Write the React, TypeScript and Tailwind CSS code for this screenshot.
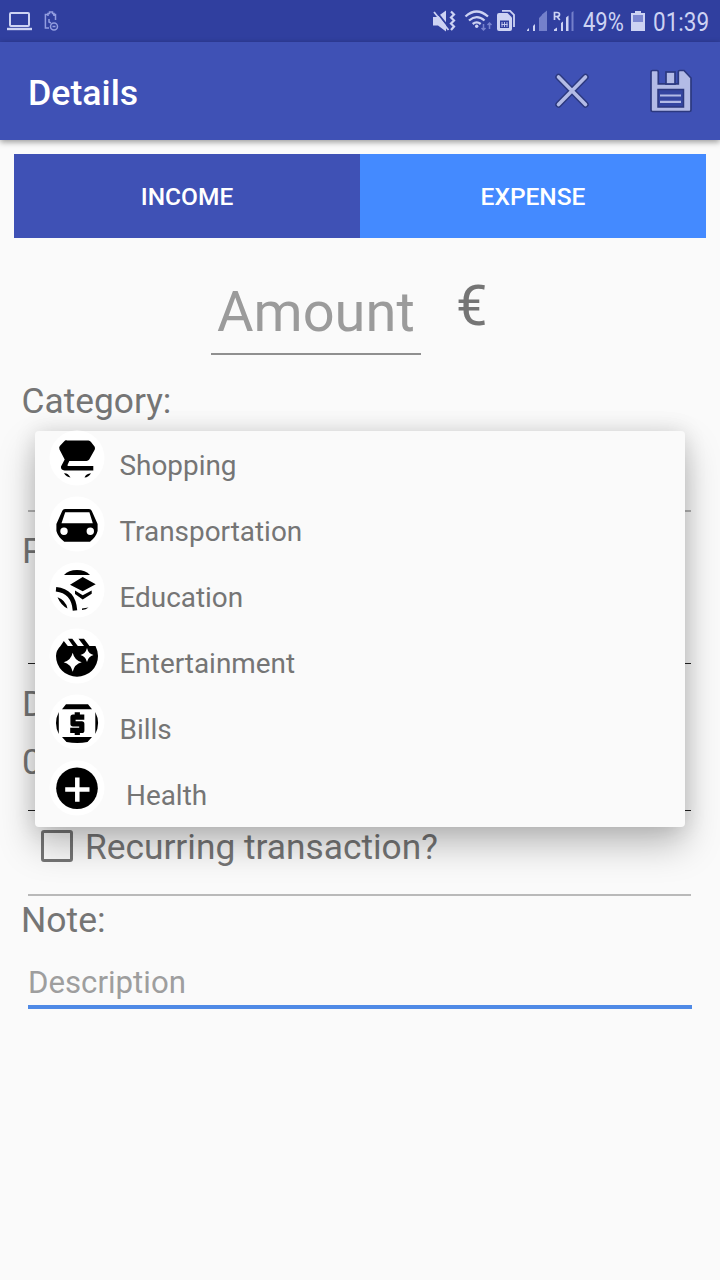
import type { ReactNode } from "react";

function StatusBar() {
  return (
    <header className="flex h-[42px] shrink-0 items-center bg-[#303f9f] text-[#cdd3f3]">
      <svg className="h-[42px] w-[70px]" viewBox="0 0 70 42" fill="none" stroke="currentColor">
        <rect x="10" y="13" width="19" height="13" rx="1" strokeWidth="2" />
        <path d="M7 29h25" strokeWidth="2.4" />
        <g stroke="#929de0" strokeWidth="1.5">
          <path d="M49 28h-3.600V14.500H48M53 14.500h2.500V20M48 16v-2.500h1.500V12h3v1.500H54V16" />
          <path d="M49 19v3l2 1" />
          <circle cx="54" cy="26.500" r="3.500" />
          <path d="M52.500 26.500h3" />
        </g>
      </svg>
      <svg className="ml-[350px] h-[42px] w-[160px]" viewBox="420 0 160 42" fill="currentColor">
        <path d="M433 17h4l9-6.500V31.500l-8-6h-5z" />
        <path d="M435.500 10.500l13 16.500" stroke="#303f9f" strokeWidth="2" />
        <path d="M434 12l14.500 18" stroke="currentColor" strokeWidth="1.800" />
        <path d="M451 11.500l3 3-3 3 3 3-3 3 3 3-3 3.500" fill="none" stroke="currentColor" strokeWidth="2.200" />
        <g fill="none" stroke="currentColor" strokeWidth="2.300">
          <path d="M465.500 16.500q11-10 22.500 0" />
          <path d="M469 20.500q7.800-6.800 15.500 0" />
          <path d="M472.700 24q4-3.300 8 0" />
        </g>
        <circle cx="476.700" cy="26.300" r="1.700" />
        <g fill="none" stroke="#7782ce" strokeWidth="1.500">
          <path d="M483.500 24v6M481.500 28l2 2 2-2M489.500 29v-6M487.500 25l2-2 2 2" />
        </g>
        <path d="M502 10.800h8l4 4V27" fill="none" stroke="currentColor" strokeWidth="1.800" />
        <path d="M499 13h8.500l4.500 4.500V29q0 2-2 2h-11q-2 0-2-2V15q0-2 2-2z" />
        <rect x="500" y="20.500" width="9" height="7.500" fill="#303f9f" />
        <path d="M502 22v5M504.500 22v5M507 22v5M501.500 24.500h6" stroke="currentColor" strokeWidth="0.900" />
        <path d="M527 31v-1l2-2v3zM533 31v-5l2-2v7z" />
        <path d="M539 31V18l3-3v16zM542 31V14.500l5-4V31z" fill="#7480cb" />
        <path d="M554.500 20v-7.500h2.500q2.500 0 2.500 2t-2.500 2h-2.500M557 16.500l2.800 3.500" fill="none" stroke="currentColor" strokeWidth="1.700" />
        <path d="M554 31v-1.500l3-2V31zM561 31v-8l2-1.500V31zM566 31V17.500l2.500-2V31z" />
        <path d="M571.500 31V12.500l2-1.500v20z" fill="#7480cb" />
      </svg>
      <span className="ml-[3px] w-[42px] origin-left scale-x-[0.88] whitespace-nowrap pt-[3px] text-[25px] leading-[30px]">49%</span>
      <svg className="ml-[6px] h-[42px] w-[16px]" viewBox="631 0 16 42" fill="currentColor">
        <path d="M635 11h6v2h4v18h-14V13h4z" />
        <path d="M633 15h10v7h-10z" fill="#7c87d1" />
      </svg>
      <span className="ml-[6px] w-[60px] origin-left scale-x-[0.9] whitespace-nowrap pt-[3px] text-[25px] leading-[30px]">01:39</span>
    </header>
  );
}

function AppBar() {
  return (
    <div className="relative z-10 flex h-[98px] shrink-0 items-center bg-[#3f51b5] pl-7 shadow-[0_2px_6px_rgba(0,0,0,0.4)]">
      <h1 className="grow pt-[3px] text-[35.700px] font-medium leading-10 text-white">Details</h1>
      <button className="mr-[57px]" aria-label="Cancel">
        <svg className="block h-[40px] w-[40px]" viewBox="0 0 40 40" fill="none" strokeLinecap="round">
          <path d="M6.500 6L33.500 33.500M33.500 6L6.500 33.500" stroke="#2c397f" strokeWidth="6.500" />
          <path d="M6.500 6L33.500 33.500M33.500 6L6.500 33.500" stroke="#b3bbe6" strokeWidth="3.600" />
        </svg>
      </button>
      <button className="mr-[27px]" aria-label="Save">
        <svg className="block h-[44px] w-[44px]" viewBox="649 69 44 44">
          <path d="M652.500 70.500H657q1.300 0 1.300 1.500v11.800h20V72q0-1.500 1.500-1.500h4.200l7 7.500v32q0 1.500-1.500 1.500h-37q-1.500 0-1.500-1.500V72q0-1.500 1.500-1.500z" fill="#b3bbe6" stroke="#2c397f" strokeWidth="1.700" />
          <rect x="666" y="72" width="9" height="12" fill="#b3bbe6" stroke="#2c397f" strokeWidth="1.700" />
          <rect x="658" y="89.500" width="25.500" height="17.500" fill="#3445a0" stroke="#2c397f" strokeWidth="1.500" />
          <path d="M660 95.500h21M660 101.800h21" stroke="#b3bbe6" strokeWidth="2.200" />
        </svg>
      </button>
    </div>
  );
}

const icons: Record<string, ReactNode> = {
  shopping: (
    <>
      <path d="M17.500 10.500h22q1.500 0 2.500 1.500l3.700 4.700q.6 1.500 0 3l-5.500 9.800q-1 1.400-2.700 1.400H20.300L18.500 35q-.3 1 .8 1H44.300v4.400H15.500q-4-.4-3.500-4l3.700-7-5.200-10q-.8-2 .3-3.300l4-4.400q1.200-1.700 2.700-1.700z" />
      <path d="M15 43.300q3.800-.5 6.500 4.200-4-.3-6.500-4.200zM35.500 47.500q1.500-4 6.500-4.300-2.200 4-6.500 4.300z" />
    </>
  ),
  car: (
    <path
      fillRule="evenodd"
      d="M16 13h24q2 0 2.700 1.800L48.600 28v7q-1.500 6-7.600 10.700H15.300Q9 41 7.400 35v-7l5.900-13.200Q14 13 16 13zM16.200 16.300L12.500 27.300h31.300l-3.400-11zM15 31.600a3.700 3.700 0 100 7.400 3.700 3.700 0 100-7.400zM41.300 31.600a3.700 3.700 0 100 7.400 3.700 3.700 0 100-7.400z"
    />
  ),
  education: (
    <>
      <path d="M15 13q4.500-5 13-5t13 5z" />
      <path d="M21 22.800l12.700-7.800 13 7.300-13 6.900zM26 28.500l7.700 4.700 9-4.700v3.300L33.700 37.500 26 32z" />
      <path d="M7 27.300Q24.500 29 26 48.500" fill="none" stroke="#000" strokeWidth="4.500" />
      <path d="M8.500 35.300Q16.500 38 18.500 46.500q-6.500-3-10-11.200zM33 46.500l6.500-1q-2.500 2.200-6.500 2.500z" />
    </>
  ),
  entertainment: (
    <>
      <path d="M11.500 18L14.800 13l4 5H24l-5-7.300h4.300L28.800 18H35l-5.500-7.300h5.500L40.500 18h6Q49 23 49 28a21 20.700 0 11-42 0q0-5.500 4.500-10z" />
      <path d="M23.700 24.700q1.800 7.700 9 9.500-7.200 1.800-9 9.500-1.800-7.700-9-9.500 7.200-1.800 9-9.500zM38 20q1.300 5.700 6.500 7-5.200 1.300-6.500 7-1.300-5.700-6.500-7 5.200-1.300 6.500-7z" fill="#fff" />
    </>
  ),
  bills: (
    <>
      <path d="M17 10.300h22L43 15.300H13zM13 43h30l-4.500 5q-10 1.800-21 0z" />
      <path d="M9.800 18v22q-5.600-11 0-22zM46.300 18v22q5.600-11 0-22z" />
      <path d="M35.300 23.200H24v6.600h8.800v6.600H21.200M28.300 18.300v5M28.300 36v5" fill="none" stroke="#000" strokeWidth="5.200" strokeLinejoin="round" />
    </>
  ),
  health: (
    <>
      <circle cx="28" cy="28.300" r="20.800" />
      <path d="M28.300 17.500v24.300M16.200 29.600h24.300" stroke="#fff" strokeWidth="4.500" />
    </>
  ),
};

const categories = [
  { icon: "shopping", label: "Shopping" },
  { icon: "car", label: "Transportation" },
  { icon: "education", label: "Education" },
  { icon: "entertainment", label: "Entertainment" },
  { icon: "bills", label: "Bills" },
  { icon: "health", label: "Health" },
];

function CategoryMenu() {
  return (
    <ul className="absolute left-[35px] top-[431px] z-20 h-[396px] w-[650px] rounded-[4px] bg-[#fafafa] shadow-[0_18px_36px_rgba(0,0,0,0.25),0_0_22px_rgba(0,0,0,0.12)]">
      {categories.map(({ icon, label }) => (
        <li key={icon} className="flex h-[66px] items-start pl-[14px]">
          <svg className="-mt-px h-14 w-14 shrink-0" viewBox="0 0 56 56">
            <circle cx="28" cy="28" r="27.500" fill="#fff" />
            {icons[icon]}
          </svg>
          <span className={`pt-[17px] text-[27.900px] leading-9 text-[#757575] ${icon === "health" ? "pl-[21px]" : "pl-[14.500px]"}`}>
            {label}
          </span>
        </li>
      ))}
    </ul>
  );
}

export default function App() {
  return (
    <div className="relative flex h-[1280px] w-[720px] flex-col overflow-hidden bg-[#fafafa] font-['Roboto',sans-serif] text-[#757575]">
      <StatusBar />
      <AppBar />
      <main className="flex flex-col">
        <div className="mx-[14px] mt-[14px] flex h-[84px] text-[24.500px] font-medium text-white">
          <button className="w-[346px] bg-[#3f51b5] pt-[3px]">INCOME</button>
          <button className="grow bg-[#448aff] pt-[3px]">EXPENSE</button>
        </div>
        <div className="flex h-[117px] pl-[211px]">
          <div className="w-[210px] border-b-2 border-[#8f8f8f] pl-[6px] pt-[40px] text-[56px] leading-[68px] text-[#9b9b9b]">Amount</div>
          <div className="pl-[35px] pt-[34px] text-[56px] leading-[68px]">€</div>
        </div>
        <div className="h-[155px] pl-[21.500px] pt-[24px] text-[35.300px] leading-[44px]">Category:</div>
        <hr className="ml-[28px] mr-[29px] border-t-2 border-[#b5b5b5]" />
        <div className="h-[151px] pl-[22px] pt-[17px] text-[35.500px] leading-[44px]">P</div>
        <hr className="ml-[28px] mr-[29px] border-t border-[#222]" />
        <div className="h-[146px] pl-[22px] pt-[18px] text-[35.500px] leading-[44px]">
          <div className="h-[58px]">D</div>
          <div>0</div>
        </div>
        <hr className="ml-[28px] mr-[29px] border-t border-[#222]" />
        <label className="flex h-[83px] items-start pl-[41px] pt-[14px] text-[35.300px] leading-[44px]">
          <span className="mt-[5px] h-8 w-8 rounded-[3px] border-[3px] border-[#757575]" />
          <span className="pl-[12px]">Recurring transaction?</span>
        </label>
        <hr className="ml-[28px] mr-[29px] border-t-2 border-[#b9b9b9]" />
        <div className="h-[56px] pl-[21px] pt-[2px] text-[35.500px] leading-[44px]">Note:</div>
        <div className="mx-[28px] h-[57px] border-b-4 border-[#4f8ae6] pt-[10px] text-[31.200px] leading-[41px] text-[#9e9e9e]">Description</div>
      </main>
      <CategoryMenu />
    </div>
  );
}
